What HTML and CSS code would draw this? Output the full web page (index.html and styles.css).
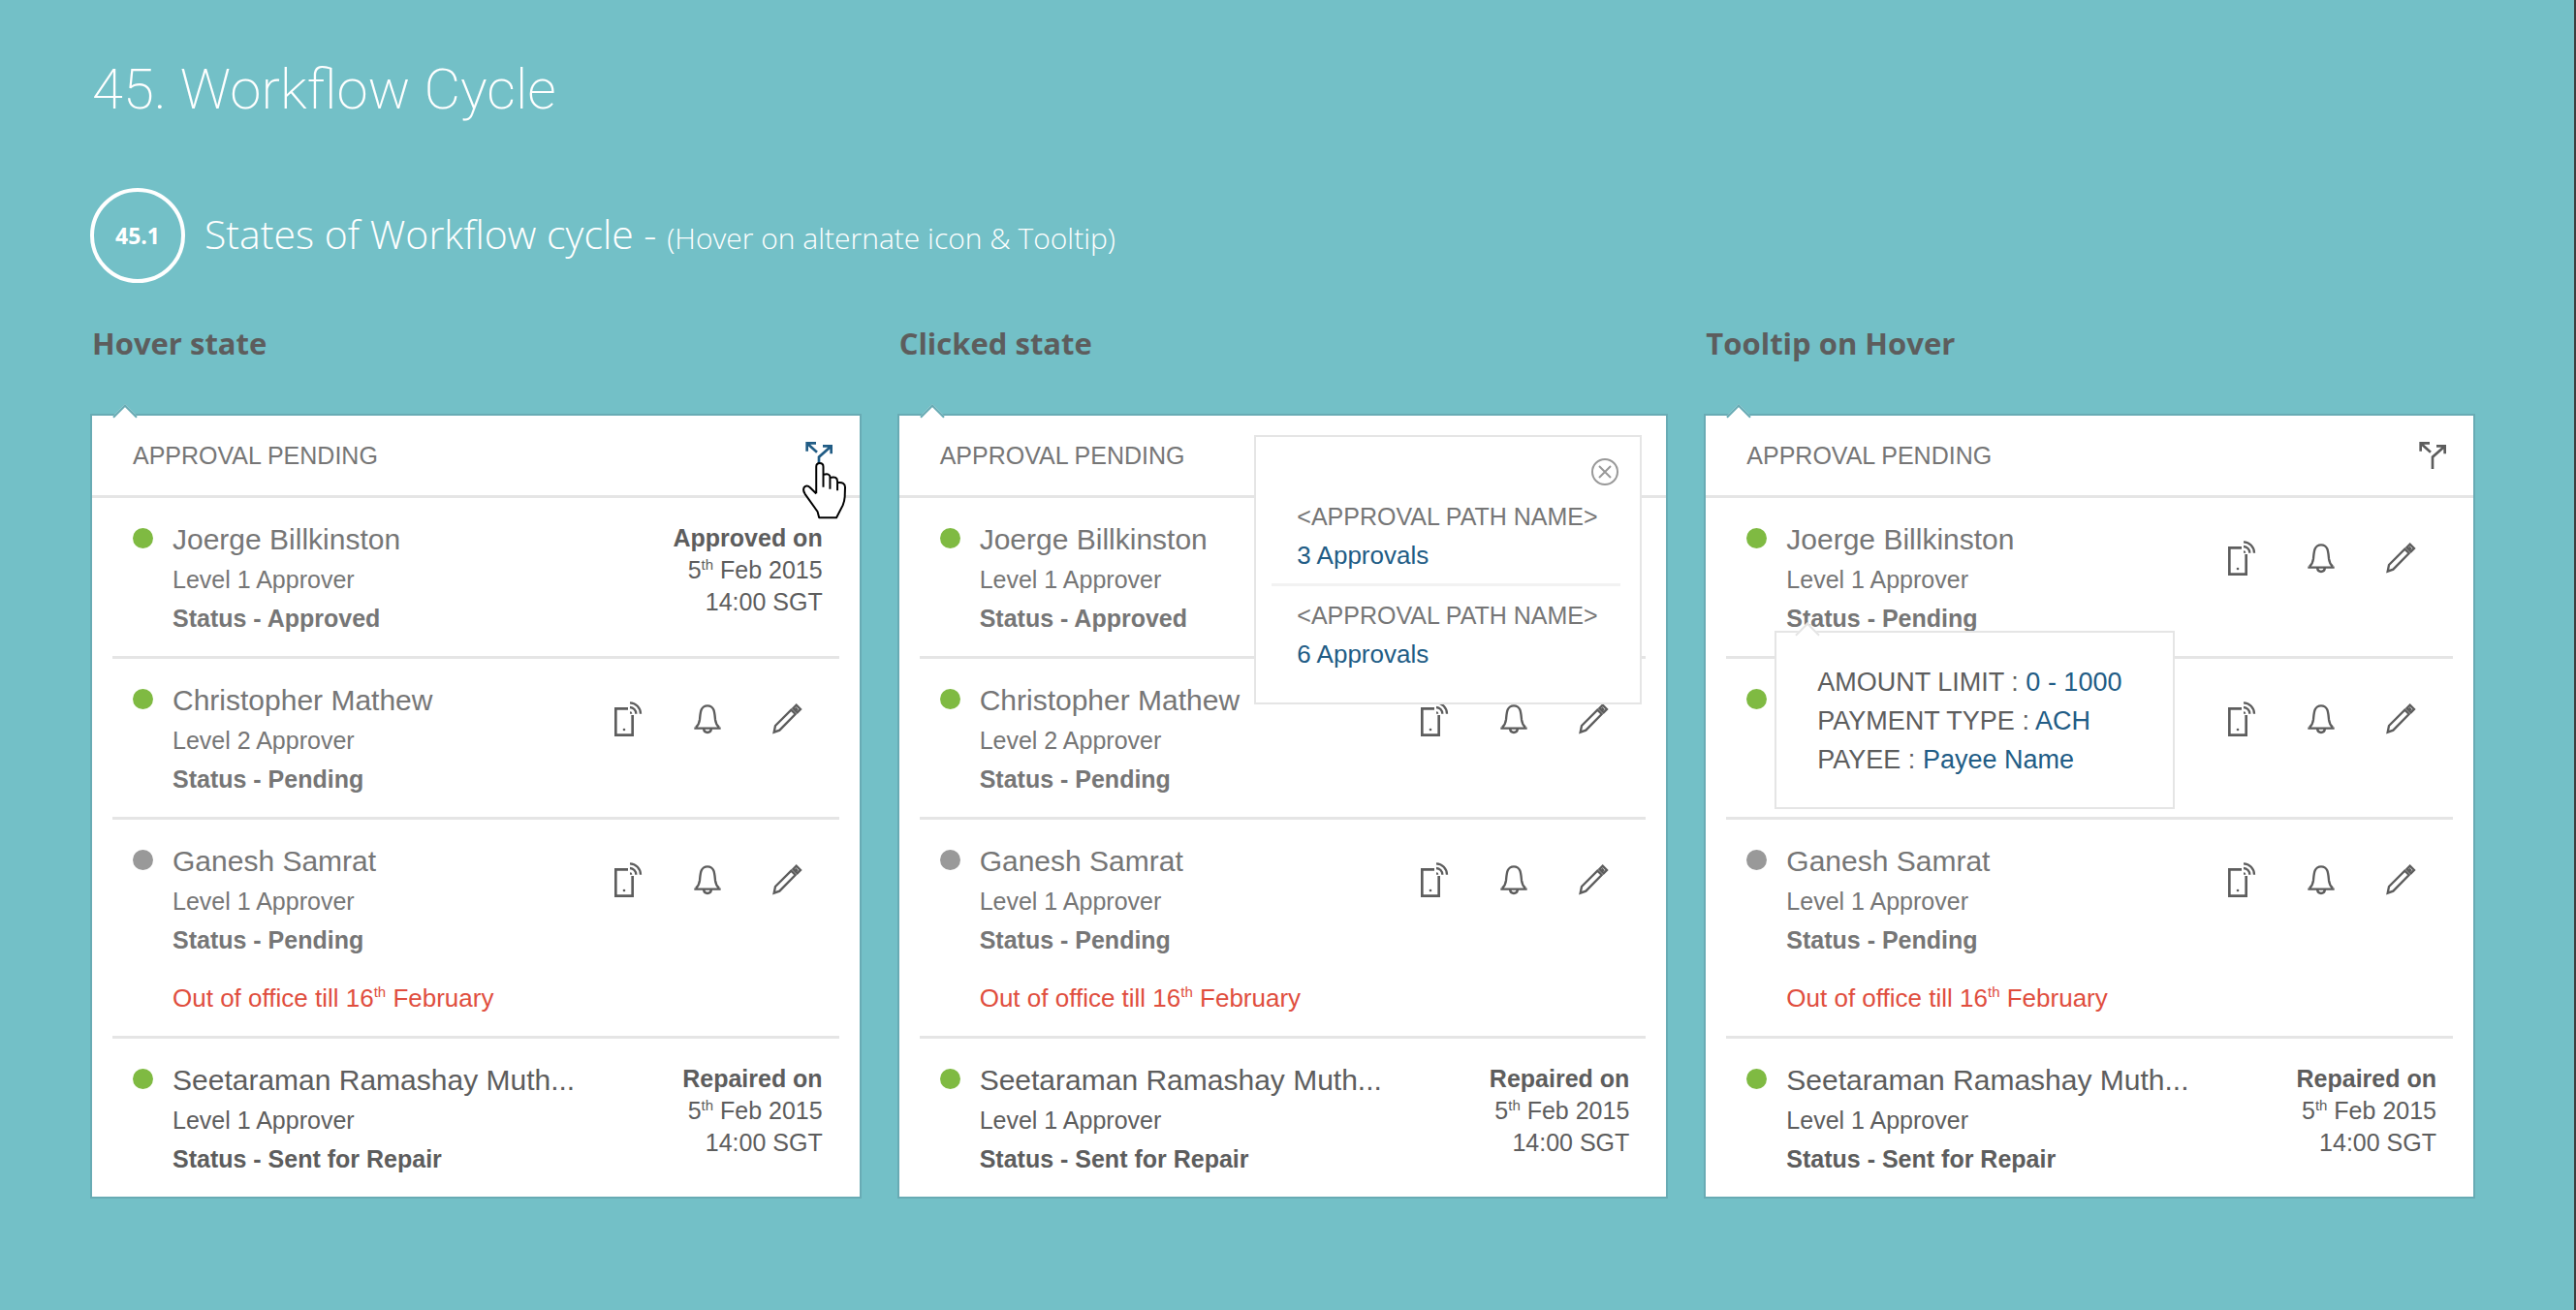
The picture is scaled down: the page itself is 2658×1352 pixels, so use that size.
FILE: index.html
```html
<!DOCTYPE html>
<html lang="en">
<head>
<meta charset="utf-8">
<title>45. Workflow Cycle</title>
<link rel="stylesheet" href="styles.css">
</head>
<body>
<svg class="sprite" aria-hidden="true">
  <symbol id="branch" viewBox="0 0 84 84"><path d="M5 29V4H33M6 5L36 32M54 13H80V37M79 14L42 47V84" fill="none" stroke="currentColor" stroke-width="8"/></symbol>
  <symbol id="phone" viewBox="0 0 108 108"><g fill="none" stroke="currentColor" stroke-width="8"><path d="M54 22H16V104H68V42"/><path d="M60 4A34 34 0 0 1 93 38M60 18A20 20 0 0 1 79 38" stroke-width="7"/></g><circle cx="42" cy="87" r="4" fill="currentColor"/><path d="M60 38V31A7 7 0 0 1 67 38Z" fill="currentColor"/></symbol>
  <symbol id="bell" viewBox="0 0 108 108"><path d="M13 83H95M18 80Q28 72 30 56C32 36 32 13 54 13C76 13 76 36 78 56Q80 72 90 80M42 85Q44 96 54 96Q64 96 66 85" fill="none" stroke="currentColor" stroke-width="7"/></symbol>
  <symbol id="pencil" viewBox="0 0 108 108"><path d="M14 95L18 75L67 26L80 39L31 89ZM73 21L83 11L96 24L86 34ZM80 20L87 27" fill="none" stroke="currentColor" stroke-width="7"/></symbol>
</svg>

<main class="page">
  <h1 class="title">45. Workflow Cycle</h1>
  <header class="section-head">
    <span class="badge">45.1</span>
    <h2 class="section-title">States of Workflow cycle - <small>(Hover on alternate icon &amp; Tooltip)</small></h2>
  </header>

  <div class="columns">
    <section class="column">
      <h3 class="state">Hover state</h3>
      <div class="card">
        <div class="card-head">
          <h4 class="card-title">APPROVAL PENDING</h4>
          <button class="icon-btn branch active" aria-label="Alternate paths"><svg><use href="#branch"/></svg></button>
        </div>
        <svg class="cursor" viewBox="0 0 136 178" aria-hidden="true"><path d="M43 97V14Q43 3 54 3Q65 3 65 14V78M65 39Q86 33 86 47V84M86 48Q109 42 109 60V88M109 64Q133 61 133 78L132 108Q131 122 126 134L106 173H52L47 154L8 99Q-2 82 9 75Q16 71 24 79L43 98" /></svg>
        <ul class="people">
          <li class="row">
            <span class="dot"></span>
            <div class="who"><p class="name">Joerge Billkinston</p><p>Level 1 Approver</p><p><strong>Status - Approved</strong></p></div>
            <div class="when"><p><strong>Approved on</strong></p><p>5<sup>th</sup> Feb 2015</p><p>14:00 SGT</p></div>
          </li>
          <li class="row">
            <span class="dot"></span>
            <div class="who"><p class="name">Christopher Mathew</p><p>Level 2 Approver</p><p><strong>Status - Pending</strong></p></div>
            <div class="actions"><button class="icon-btn" aria-label="Call"><svg><use href="#phone"/></svg></button><button class="icon-btn" aria-label="Remind"><svg><use href="#bell"/></svg></button><button class="icon-btn" aria-label="Edit"><svg><use href="#pencil"/></svg></button></div>
          </li>
          <li class="row">
            <span class="dot away"></span>
            <div class="who"><p class="name">Ganesh Samrat</p><p>Level 1 Approver</p><p><strong>Status - Pending</strong></p><p class="notice">Out of office till 16<sup>th</sup> February</p></div>
            <div class="actions"><button class="icon-btn" aria-label="Call"><svg><use href="#phone"/></svg></button><button class="icon-btn" aria-label="Remind"><svg><use href="#bell"/></svg></button><button class="icon-btn" aria-label="Edit"><svg><use href="#pencil"/></svg></button></div>
          </li>
          <li class="row repaired">
            <span class="dot"></span>
            <div class="who"><p class="name">Seetaraman Ramashay Muth...</p><p>Level 1 Approver</p><p><strong>Status - Sent for Repair</strong></p></div>
            <div class="when"><p><strong>Repaired on</strong></p><p>5<sup>th</sup> Feb 2015</p><p>14:00 SGT</p></div>
          </li>
        </ul>
      </div>
    </section>

    <section class="column">
      <h3 class="state">Clicked state</h3>
      <div class="card">
        <div class="card-head">
          <h4 class="card-title">APPROVAL PENDING</h4>
        </div>
        <ul class="people">
          <li class="row">
            <span class="dot"></span>
            <div class="who"><p class="name">Joerge Billkinston</p><p>Level 1 Approver</p><p><strong>Status - Approved</strong></p></div>
          </li>
          <li class="row">
            <span class="dot"></span>
            <div class="who"><p class="name">Christopher Mathew</p><p>Level 2 Approver</p><p><strong>Status - Pending</strong></p></div>
            <div class="actions"><button class="icon-btn" aria-label="Call"><svg><use href="#phone"/></svg></button><button class="icon-btn" aria-label="Remind"><svg><use href="#bell"/></svg></button><button class="icon-btn" aria-label="Edit"><svg><use href="#pencil"/></svg></button></div>
          </li>
          <li class="row">
            <span class="dot away"></span>
            <div class="who"><p class="name">Ganesh Samrat</p><p>Level 1 Approver</p><p><strong>Status - Pending</strong></p><p class="notice">Out of office till 16<sup>th</sup> February</p></div>
            <div class="actions"><button class="icon-btn" aria-label="Call"><svg><use href="#phone"/></svg></button><button class="icon-btn" aria-label="Remind"><svg><use href="#bell"/></svg></button><button class="icon-btn" aria-label="Edit"><svg><use href="#pencil"/></svg></button></div>
          </li>
          <li class="row repaired">
            <span class="dot"></span>
            <div class="who"><p class="name">Seetaraman Ramashay Muth...</p><p>Level 1 Approver</p><p><strong>Status - Sent for Repair</strong></p></div>
            <div class="when"><p><strong>Repaired on</strong></p><p>5<sup>th</sup> Feb 2015</p><p>14:00 SGT</p></div>
          </li>
        </ul>
        <div class="popup">
          <button class="close" aria-label="Close"><svg viewBox="0 0 28 28"><path d="M8 8L20 20M20 8L8 20"/><circle cx="14" cy="14" r="13"/></svg></button>
          <div class="path"><p>&lt;APPROVAL PATH NAME&gt;</p><a href="#">3 Approvals</a></div>
          <div class="path"><p>&lt;APPROVAL PATH NAME&gt;</p><a href="#">6 Approvals</a></div>
        </div>
      </div>
    </section>

    <section class="column">
      <h3 class="state">Tooltip on Hover</h3>
      <div class="card">
        <div class="card-head">
          <h4 class="card-title">APPROVAL PENDING</h4>
          <button class="icon-btn branch" aria-label="Alternate paths"><svg><use href="#branch"/></svg></button>
        </div>
        <ul class="people">
          <li class="row">
            <span class="dot"></span>
            <div class="who"><p class="name">Joerge Billkinston</p><p>Level 1 Approver</p><p><strong>Status - Pending</strong></p></div>
            <div class="actions"><button class="icon-btn" aria-label="Call"><svg><use href="#phone"/></svg></button><button class="icon-btn" aria-label="Remind"><svg><use href="#bell"/></svg></button><button class="icon-btn" aria-label="Edit"><svg><use href="#pencil"/></svg></button></div>
            <div class="tooltip" role="tooltip">
              <p>AMOUNT LIMIT : <b>0 - 1000</b></p>
              <p>PAYMENT TYPE : <b>ACH</b></p>
              <p>PAYEE : <b>Payee Name</b></p>
            </div>
          </li>
          <li class="row">
            <span class="dot"></span>
            <div class="actions"><button class="icon-btn" aria-label="Call"><svg><use href="#phone"/></svg></button><button class="icon-btn" aria-label="Remind"><svg><use href="#bell"/></svg></button><button class="icon-btn" aria-label="Edit"><svg><use href="#pencil"/></svg></button></div>
          </li>
          <li class="row">
            <span class="dot away"></span>
            <div class="who"><p class="name">Ganesh Samrat</p><p>Level 1 Approver</p><p><strong>Status - Pending</strong></p><p class="notice">Out of office till 16<sup>th</sup> February</p></div>
            <div class="actions"><button class="icon-btn" aria-label="Call"><svg><use href="#phone"/></svg></button><button class="icon-btn" aria-label="Remind"><svg><use href="#bell"/></svg></button><button class="icon-btn" aria-label="Edit"><svg><use href="#pencil"/></svg></button></div>
          </li>
          <li class="row repaired">
            <span class="dot"></span>
            <div class="who"><p class="name">Seetaraman Ramashay Muth...</p><p>Level 1 Approver</p><p><strong>Status - Sent for Repair</strong></p></div>
            <div class="when"><p><strong>Repaired on</strong></p><p>5<sup>th</sup> Feb 2015</p><p>14:00 SGT</p></div>
          </li>
        </ul>
      </div>
    </section>
  </div>
</main>
</body>
</html>
```

FILE: styles.css
```css
:root {
  --teal: #73c0c7;
  --teal-edge: #68abb4;
  --line: #e5e5e5;
  --text: #767676;
  --text-dark: #5d5d5d;
  --blue: #215c85;
}

* {
  box-sizing: border-box;
}

body,
h1, h2, h3, h4, p, ul {
  margin: 0;
  padding: 0;
}

body {
  min-height: 100vh;
  background: var(--teal);
  border-right: 2px solid #3e3e3e;
  color: var(--text);
  font: 25px/40px "Liberation Sans", Arial, sans-serif;
}

.sprite {
  display: none;
}

.page {
  padding: 52px 102px 52px 93px;
}

.title {
  padding-left: 2px;
  color: #fff;
  font: 200 58px/80px Roboto, "Liberation Sans", sans-serif;
}

.section-head {
  display: flex;
  align-items: center;
  gap: 20px;
  margin-top: 62px;
  color: #fff;
}

.badge {
  display: grid;
  place-items: center;
  width: 98px;
  height: 98px;
  border: 4px solid #fff;
  border-radius: 50%;
  font: 700 23px/30px "Open Sans", sans-serif;
}

.section-title {
  font: 350 41px/60px "Open Sans", sans-serif;
}

.section-title small {
  font-size: 30px;
}

.columns {
  display: grid;
  grid-template-columns: repeat(3, 1fr);
  gap: 37px;
  margin-top: 42px;
}

.state {
  margin-bottom: 53px;
  padding-left: 2px;
  color: var(--text-dark);
  font: 700 31px/40px "Open Sans", sans-serif;
}

.card {
  position: relative;
  border: 2px solid var(--teal-edge);
  background: #fff;
}

.card::before,
.tooltip::before {
  content: "";
  position: absolute;
  width: 16px;
  height: 16px;
  border: 2px solid var(--teal-edge);
  border-right: 0;
  border-bottom: 0;
  background: #fff;
  transform: rotate(45deg);
}

.card::before {
  top: -8px;
  left: 25px;
}

.card-head {
  position: relative;
  display: flex;
  align-items: center;
  justify-content: space-between;
  height: 85px;
  padding: 0 28px 0 42px;
  border-bottom: 3px solid var(--line);
}

.card-title {
  font: inherit;
}

.icon-btn {
  width: 36px;
  height: 36px;
  padding: 0;
  border: 0;
  background: none;
  color: var(--text-dark);
}

.icon-btn svg,
.close svg {
  display: block;
  width: 100%;
  height: 100%;
}

.icon-btn.branch {
  width: 28px;
  height: 28px;
}

.icon-btn.active {
  color: var(--blue);
}

.cursor {
  position: absolute;
  z-index: 1;
  top: 48px;
  right: 14px;
  width: 45px;
  height: 59px;
  fill: #fff;
  stroke: #000;
  stroke-width: 6;
  stroke-linejoin: round;
}

.people {
  padding: 0 21px;
  list-style: none;
}

.row {
  position: relative;
  display: flex;
  align-items: flex-start;
  min-height: 166px;
  padding: 22px 17px 19px 21px;
  border-bottom: 3px solid var(--line);
}

.row:last-child {
  min-height: 163px;
  border-bottom: 0;
}

.dot {
  flex: none;
  width: 21px;
  height: 21px;
  margin: 9px 20px 0 0;
  border-radius: 50%;
  background: #7fba42;
}

.dot.away {
  background: #999;
}

.who {
  flex: 1;
}

.name {
  font-size: 30px;
  line-height: 42px;
}

.notice {
  margin-top: 20px;
  color: #e04e3e;
  font-size: 26px;
}

.repaired,
.when {
  color: var(--text-dark);
}

.when {
  margin-top: 3px;
  line-height: 33px;
  text-align: right;
}

sup {
  font-size: 15px;
  line-height: 0;
}

.actions {
  display: flex;
  gap: 46px;
  margin: 22px 19px 0 auto;
}

.popup {
  position: absolute;
  top: 20px;
  right: 25px;
  width: 400px;
  padding: 22px 20px 21px 16px;
  border: 2px solid var(--line);
  background: #fff;
}

.close {
  display: block;
  width: 28px;
  height: 28px;
  margin: 0 2px 12px auto;
  padding: 0;
  border: 0;
  background: none;
}

.close svg {
  fill: none;
  stroke: #999;
  stroke-width: 2;
}

.path {
  padding: 0 0 9px 26px;
  border-bottom: 3px solid #f2f2f2;
}

.path + .path {
  padding-top: 10px;
  border-bottom: 0;
}

.path a {
  display: block;
  color: var(--blue);
  font-size: 26px;
  text-decoration: none;
}

.tooltip {
  position: absolute;
  z-index: 1;
  top: 137px;
  left: 50px;
  width: 413px;
  padding: 31px 0 29px 42px;
  border: 2px solid var(--line);
  background: #fff;
  color: var(--text-dark);
  font-size: 27px;
}

.tooltip::before {
  top: -7px;
  left: 23px;
  border-color: var(--line);
}

.tooltip b {
  color: var(--blue);
  font-weight: 400;
}
```
